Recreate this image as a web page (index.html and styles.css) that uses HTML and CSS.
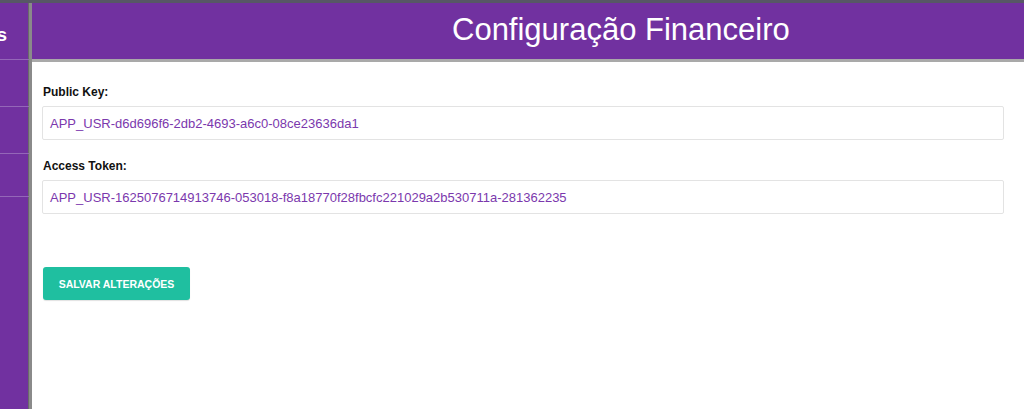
FILE: index.html
```html
<!DOCTYPE html>
<html lang="pt">
<head>
<meta charset="utf-8">
<title>Configuração Financeiro</title>
<link rel="stylesheet" href="styles.css">
</head>
<body>
<div class="topbar"></div>
<div class="layout">
  <aside class="sidebar">
    <div class="side-item side-title"><span>Configurações</span></div>
    <div class="side-item"></div>
    <div class="side-item"></div>
    <div class="side-item short"></div>
  </aside>
  <main class="main">
    <header class="header"><h1>Configuração Financeiro</h1></header>
    <section class="content">
      <div class="field">
        <label class="label">Public Key:</label>
        <div class="input">APP_USR-d6d696f6-2db2-4693-a6c0-08ce23636da1</div>
      </div>
      <div class="field">
        <label class="label">Access Token:</label>
        <div class="input">APP_USR-1625076714913746-053018-f8a18770f28fbcfc221029a2b530711a-281362235</div>
      </div>
      <button class="btn">SALVAR ALTERAÇÕES</button>
    </section>
  </main>
</div>
</body>
</html>
```
FILE: styles.css
```css
* { box-sizing: border-box; }
html, body { margin: 0; padding: 0; height: 100%; }
body {
  font-family: "Liberation Sans", Arial, sans-serif;
  background: #ffffff;
  overflow: hidden;
}
.topbar { height: 3px; background: #575766; }
.layout { display: flex; height: calc(100% - 3px); }
.sidebar {
  width: 32px;
  flex: none;
  background: #7131a0;
  border-right: 3px solid #8a8a8a;
  box-shadow: inset -1px 0 0 #6a6a6a;
  display: flex;
  flex-direction: column;
}
.side-item {
  height: 47px;
  border-bottom: 1px solid #9467b8;
  display: flex;
  justify-content: flex-end;
  align-items: center;
  overflow: hidden;
  padding-right: 22px;
}
.side-item.side-title { height: 57px; padding-top: 7px; }
.side-item.short { height: 43px; }
.side-title span {
  color: #fff;
  font-weight: bold;
  font-size: 19px;
  white-space: nowrap;
}
.main { flex: 1; display: flex; flex-direction: column; }
.header {
  height: 59px;
  background: #7131a0;
  border-bottom: 3px solid #a9a9a9;
  display: flex;
  align-items: center;
  padding-left: 420px;
  padding-bottom: 2px;
}
.header h1 {
  margin: 0;
  color: #fff;
  font-weight: normal;
  font-size: 31px;
}
.content { padding: 23px 20px 0 10px; }
.field { margin-bottom: 19px; }
.label {
  display: block;
  font-size: 12px;
  font-weight: bold;
  color: #111;
  margin-bottom: 7px;
  padding-left: 1px;
}
.input {
  height: 34px;
  border: 1px solid #e3e3e3;
  border-radius: 2px;
  padding: 0 7px;
  display: flex;
  align-items: center;
  font-size: 13px;
  color: #7b38ad;
}
.btn {
  margin-top: 34px;
  margin-left: 1px;
  width: 147px;
  height: 33px;
  border: none;
  border-radius: 3px;
  background: #1fbfa0;
  color: #fff;
  font-family: "Liberation Sans", Arial, sans-serif;
  font-weight: bold;
  font-size: 10.5px;
  box-shadow: 0 1px 1px rgba(0,0,0,0.12);
}
```
